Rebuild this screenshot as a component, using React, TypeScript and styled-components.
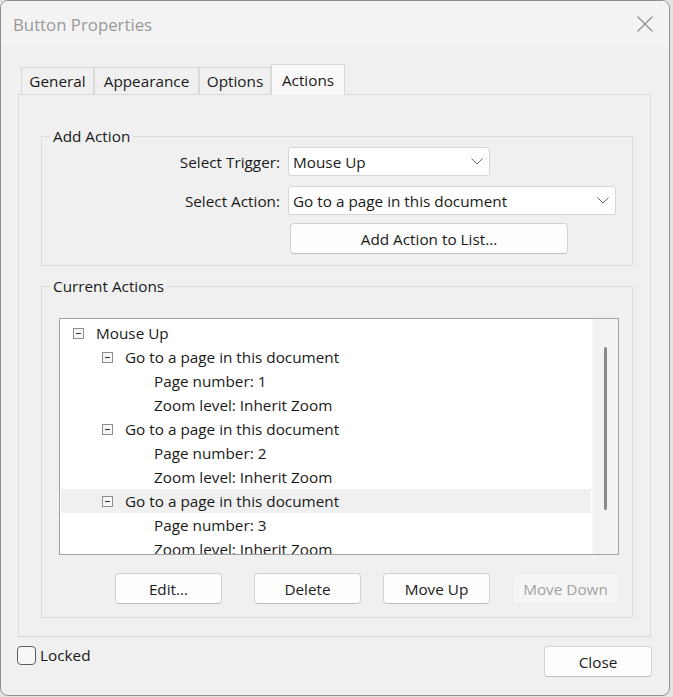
import React from 'react';
import styled, { createGlobalStyle } from 'styled-components';

const Global = createGlobalStyle`
  html, body { margin: 0; padding: 0; background: #e4e4e4; }
  body {
    font-family: "Open Sans", "Noto Sans", "Liberation Sans", sans-serif;
    font-size: 15.3px;
    color: #1a1a1a;
  }
  * { box-sizing: border-box; }
`;

const Page = styled.div`
  width: 673px;
  height: 697px;
  overflow: hidden;
`;

const Window = styled.div`
  width: 670px;
  height: 696px;
  border: 1px solid #8f8f8f;
  border-radius: 8px;
  background: #f0f0f0;
  overflow: hidden;
  display: flex;
  flex-direction: column;
`;

const TitleBar = styled.div`
  height: 46px;
  flex: none;
  display: flex;
  align-items: center;
  justify-content: space-between;
  padding-left: 12px;
  background: #f3f3f3;
`;

const Title = styled.span`
  color: #999999;
  font-size: 16.8px;
`;

const CloseX = styled.div`
  width: 48px;
  height: 46px;
  display: flex;
  align-items: center;
  justify-content: center;
`;

const Content = styled.div`
  flex: 1;
  display: flex;
  flex-direction: column;
  padding: 17px 0 0 17px;
`;

const TabStrip = styled.div`
  display: flex;
  align-items: flex-end;
  padding-left: 3px;
  height: 30px;
`;

const Tab = styled.div<{ $active?: boolean; $w: number }>`
  width: ${p => p.$w}px;
  height: ${p => (p.$active ? '31px' : '27px')};
  display: flex;
  align-items: center;
  justify-content: center;
  border: 1px solid #d9d9d9;
  border-bottom: none;
  background: ${p => (p.$active ? '#f9f9f9' : '#f0f0f0')};
  margin-bottom: ${p => (p.$active ? '-1px' : '0')};
  position: relative;
  z-index: ${p => (p.$active ? 1 : 0)};
  white-space: nowrap;
`;

const Panel = styled.div`
  width: 633px;
  height: 543px;
  border: 1px solid #dadada;
  background: #f0f0f0;
  padding: 41px 17px 0 22px;
  display: flex;
  flex-direction: column;
  gap: 20px;
`;

const Group = styled.div<{ $h: number }>`
  position: relative;
  height: ${p => p.$h}px;
  border: 1px solid #dcdcdc;
`;

const Caption = styled.span`
  position: absolute;
  top: -11px;
  left: 8px;
  padding: 0 3px;
  line-height: 20px;
  background: #f0f0f0;
`;

const FormGrid = styled.div`
  display: grid;
  grid-template-columns: 238px auto;
  column-gap: 8px;
  row-gap: 10px;
  padding-top: 10px;
  align-items: center;
`;

const Label = styled.span`
  text-align: right;
  white-space: nowrap;
`;

const Combo = styled.div<{ $w: number }>`
  width: ${p => p.$w}px;
  height: 29px;
  background: #ffffff;
  border: 1px solid #d6d6d6;
  border-radius: 3px;
  display: flex;
  align-items: center;
  justify-content: space-between;
  padding: 0 6px 0 4px;
  white-space: nowrap;
`;

const PushButton = styled.div<{ $w: number; $disabled?: boolean; $extra?: number }>`
  width: ${p => p.$w}px;
  height: 31px;
  margin-right: ${p => p.$extra ?? 0}px;
  display: flex;
  align-items: center;
  justify-content: center;
  border-radius: 4px;
  background: ${p => (p.$disabled ? '#f5f5f5' : '#fdfdfd')};
  border: 1px solid ${p => (p.$disabled ? '#ececec' : '#d2d2d2')};
  border-bottom-color: ${p => (p.$disabled ? '#ececec' : '#bdbdbd')};
  color: ${p => (p.$disabled ? '#a3a3a3' : '#1a1a1a')};
  white-space: nowrap;
`;

const AddCell = styled.div`
  grid-column: 2;
  padding-left: 2px;
  margin-top: -2px;
`;

const ActionsBody = styled.div`
  padding: 31px 13px 0 17px;
  display: flex;
  flex-direction: column;
  gap: 18px;
`;

const ListBox = styled.div`
  height: 237px;
  border: 1px solid #9ea3a8;
  background: #ffffff;
  display: flex;
`;

const TreeArea = styled.div`
  flex: 1;
  overflow: hidden;
  padding: 2px 1px 0 1px;
`;

const TreeRow = styled.div<{ $level: number; $selected?: boolean }>`
  height: 24px;
  display: flex;
  align-items: center;
  padding-left: ${p => 12 + p.$level * 29}px;
  gap: 12px;
  background: ${p => (p.$selected ? '#f0f0f0' : 'transparent')};
  white-space: nowrap;
`;

const Toggle = styled.span<{ $hidden?: boolean }>`
  width: 11px;
  height: 11px;
  flex: none;
  border: 1px solid ${p => (p.$hidden ? 'transparent' : '#8e8e8e')};
  background: ${p => (p.$hidden ? 'transparent' : '#f6f6f6')};
  display: flex;
  align-items: center;
  justify-content: center;
  &::after {
    content: '';
    width: 5px;
    height: 1px;
    background: ${p => (p.$hidden ? 'transparent' : '#333')};
  }
`;

const ScrollTrack = styled.div`
  width: 26px;
  flex: none;
  background: #f3f3f3;
  border-left: 1px solid #fafafa;
  display: flex;
  justify-content: center;
  padding: 28px 0 44px 0;
`;

const Thumb = styled.div`
  width: 3px;
  height: 100%;
  border-radius: 2px;
  background: #8a8a8a;
`;

const ButtonRow = styled.div`
  display: flex;
  justify-content: flex-end;
  gap: 22px;
`;

const Footer = styled.div`
  display: flex;
  justify-content: space-between;
  align-items: flex-start;
  padding-top: 9px;
  margin-left: -1px;
  width: 635px;
`;

const CheckLabel = styled.div`
  display: flex;
  align-items: center;
  gap: 4px;
  margin-top: -1px;
`;

const Box = styled.span`
  width: 19px;
  height: 19px;
  border: 1px solid #5c5c5c;
  border-radius: 4px;
  background: #f7f7f7;
`;

const CloseButtonWrap = styled.div`
  margin-top: 0px;
`;

const Chevron = () => (
  <svg width="12" height="7" viewBox="0 0 12 7">
    <path d="M0.5 0.5 L6 6 L11.5 0.5" fill="none" stroke="#6a6a6a" strokeWidth="1" />
  </svg>
);

type Row = { level: number; text: string; toggle: boolean; selected?: boolean };

const rows: Row[] = [
  { level: 0, text: 'Mouse Up', toggle: true },
  { level: 1, text: 'Go to a page in this document', toggle: true },
  { level: 2, text: 'Page number: 1', toggle: false },
  { level: 2, text: 'Zoom level: Inherit Zoom', toggle: false },
  { level: 1, text: 'Go to a page in this document', toggle: true },
  { level: 2, text: 'Page number: 2', toggle: false },
  { level: 2, text: 'Zoom level: Inherit Zoom', toggle: false },
  { level: 1, text: 'Go to a page in this document', toggle: true, selected: true },
  { level: 2, text: 'Page number: 3', toggle: false },
  { level: 2, text: 'Zoom level: Inherit Zoom', toggle: false },
];

const tabs = [
  { label: 'General', w: 73 },
  { label: 'Appearance', w: 105 },
  { label: 'Options', w: 72 },
  { label: 'Actions', w: 74, active: true },
];

export default function App() {
  return (
    <Page>
      <Global />
      <Window>
        <TitleBar>
          <Title>Button Properties</Title>
          <CloseX>
            <svg width="16" height="16" viewBox="0 0 16 16">
              <path d="M0.5 0.5 L15.5 15.5 M15.5 0.5 L0.5 15.5" stroke="#8a8a8a" strokeWidth="1.1" />
            </svg>
          </CloseX>
        </TitleBar>
        <Content>
          <TabStrip>
            {tabs.map(t => (
              <Tab key={t.label} $w={t.w} $active={t.active}>
                {t.label}
              </Tab>
            ))}
          </TabStrip>
          <Panel>
            <Group $h={130}>
              <Caption>Add Action</Caption>
              <FormGrid>
                <Label>Select Trigger:</Label>
                <Combo $w={202}>
                  <span>Mouse Up</span>
                  <Chevron />
                </Combo>
                <Label>Select Action:</Label>
                <Combo $w={328}>
                  <span>Go to a page in this document</span>
                  <Chevron />
                </Combo>
                <AddCell>
                  <PushButton $w={278}>Add Action to List...</PushButton>
                </AddCell>
              </FormGrid>
            </Group>
            <Group $h={332}>
              <Caption>Current Actions</Caption>
              <ActionsBody>
                <ListBox>
                  <TreeArea>
                    {rows.map((r, i) => (
                      <TreeRow key={i} $level={r.level} $selected={r.selected}>
                        <Toggle $hidden={!r.toggle} />
                        <span>{r.text}</span>
                      </TreeRow>
                    ))}
                  </TreeArea>
                  <ScrollTrack>
                    <Thumb />
                  </ScrollTrack>
                </ListBox>
                <ButtonRow>
                  <PushButton $w={107} $extra={10}>Edit...</PushButton>
                  <PushButton $w={107}>Delete</PushButton>
                  <PushButton $w={107}>Move Up</PushButton>
                  <PushButton $w={107} $disabled>Move Down</PushButton>
                </ButtonRow>
              </ActionsBody>
            </Group>
          </Panel>
          <Footer>
            <CheckLabel>
              <Box />
              <span>Locked</span>
            </CheckLabel>
            <CloseButtonWrap>
              <PushButton $w={108}>Close</PushButton>
            </CloseButtonWrap>
          </Footer>
        </Content>
      </Window>
    </Page>
  );
}
